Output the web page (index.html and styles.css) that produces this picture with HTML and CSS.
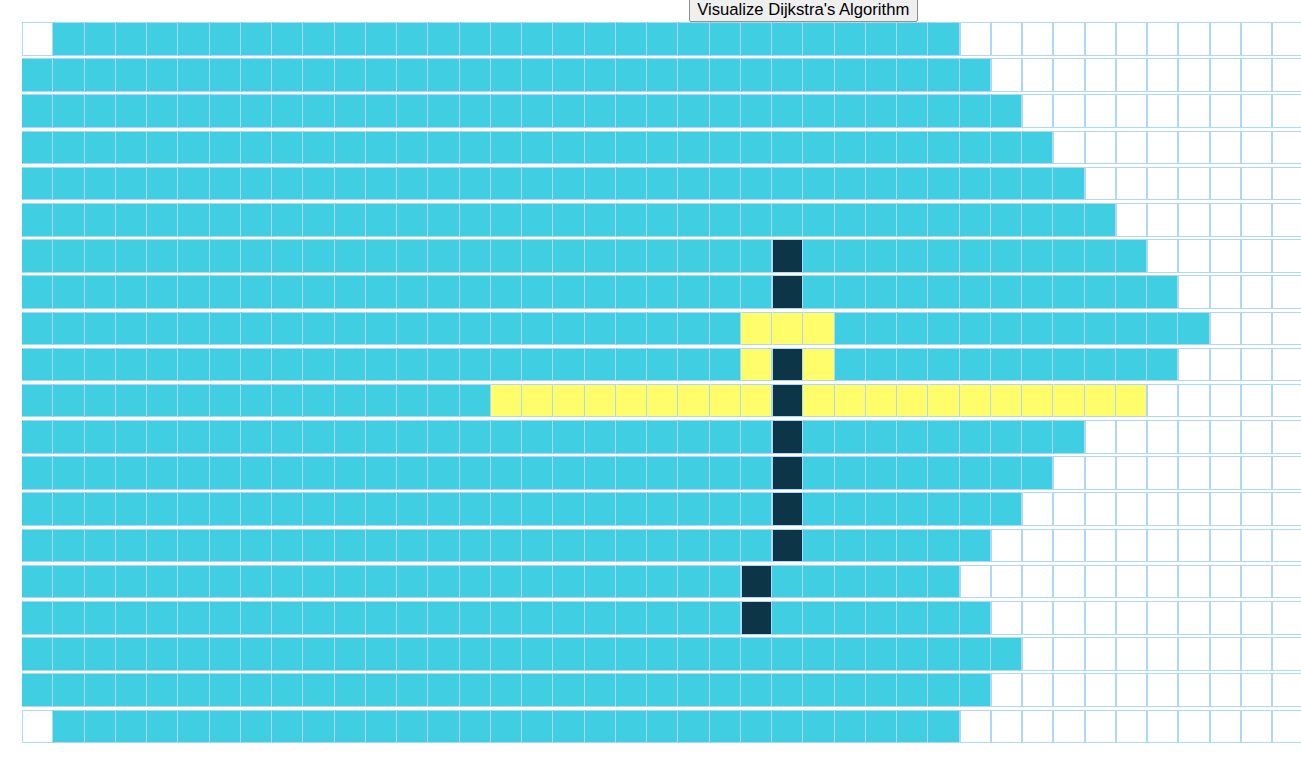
FILE: index.html
```html
<!DOCTYPE html>
<html lang="en">
<head>
<meta charset="utf-8">
<title>Pathfinding Visualizer</title>
<link rel="stylesheet" href="styles.css">
</head>
<body>
<div class="viewport">
  <div class="app">
    <div class="toolbar">
      <button class="visualize-btn" type="button">Visualize Dijkstra's Algorithm</button>
    </div>
    <div class="grid" id="grid"></div>
  </div>
</div>
<script src="script.js"></script>
</body>
</html>
```

FILE: styles.css
```css
html, body {
  margin: 0;
  padding: 0;
  background: #ffffff;
  overflow: hidden;
}

.viewport {
  width: 100%;
  height: 100vh;
  overflow: hidden;
}

.app {
  width: 1606.5px;
  font-family: "Liberation Sans", Arial, sans-serif;
}

.toolbar {
  height: 22px;
  display: flex;
  justify-content: center;
  align-items: flex-start;
}

.visualize-btn {
  margin-top: -3px;
  height: 25px;
  padding: 0 7.5px;
  font-family: "Liberation Sans", Arial, sans-serif;
  font-size: 16.67px;
  color: #000000;
  background: #efefef;
  border: 1px solid #8f8f8f;
  border-radius: 2px;
  line-height: 23px;
  white-space: nowrap;
}

.grid {
  display: grid;
  grid-template-columns: repeat(50, 31.25px);
  grid-auto-rows: 33.6px;
  row-gap: 2.6px;
  padding-left: 22px;
}

.cell {
  box-sizing: border-box;
  border: 1px solid #afd8f8;
  background: #ffffff;
}

.cell.visited {
  background: #40cee3;
  border-left-color: #40cee3;
}

.cell.path {
  background: #fffe6a;
  border-left-color: #fffe6a;
}

.cell.wall {
  background: #0c3547;
  border-left-color: #afd8f8;
}
```

FILE: script.js
```js
(function () {
  var COLS = 50;
  var ends = [29, 30, 31, 32, 33, 34, 35, 36, 37, 36, 35, 33, 32, 31, 30, 29, 30, 31, 30, 29];
  var walls = { "6,24": 1, "7,24": 1, "9,24": 1, "10,24": 1, "11,24": 1, "12,24": 1, "13,24": 1, "14,24": 1, "15,23": 1, "16,23": 1 };
  var path = { "8,23": 1, "8,24": 1, "8,25": 1, "9,23": 1, "9,25": 1 };
  var c;
  for (c = 15; c <= 23; c++) path["10," + c] = 1;
  for (c = 25; c <= 35; c++) path["10," + c] = 1;

  var grid = document.getElementById("grid");
  var frag = document.createDocumentFragment();
  for (var r = 0; r < ends.length; r++) {
    for (c = 0; c < COLS; c++) {
      var d = document.createElement("div");
      var key = r + "," + c;
      var cls = "cell";
      if (walls[key]) cls += " wall";
      else if (path[key]) cls += " path";
      else if (c <= ends[r] && !((r === 0 || r === ends.length - 1) && c === 0)) cls += " visited";
      d.className = cls;
      frag.appendChild(d);
    }
  }
  grid.appendChild(frag);
})();
```
